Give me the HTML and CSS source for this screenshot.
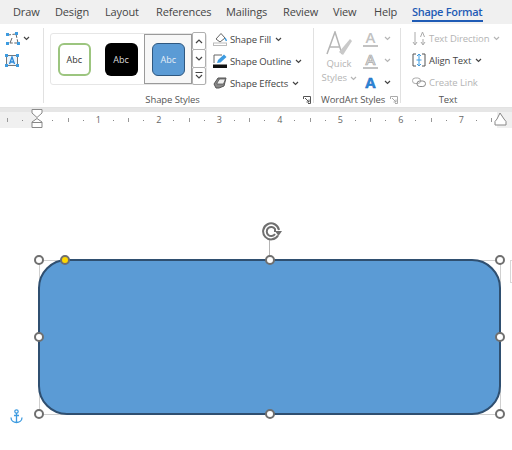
FILE: index.html
```html
<!DOCTYPE html>
<html lang="en">
<head>
    <meta charset="UTF-8">
    <title>Shape Format</title>
    <link rel="stylesheet" href="styles.css">
</head>
<body>
    <!-- Tabs -->
    <nav class="tabs">
        <span class="tab">Draw</span>
        <span class="tab">Design</span>
        <span class="tab">Layout</span>
        <span class="tab">References</span>
        <span class="tab">Mailings</span>
        <span class="tab">Review</span>
        <span class="tab">View</span>
        <span class="tab">Help</span>
        <span class="tab tab-active">Shape Format</span>
    </nav>

    <!-- Ribbon -->
    <section class="ribbon">
        <div class="group group-insert">
            <div class="insert-icon">
                <svg width="15" height="13" viewBox="0 0 15 13"><path d="M3 3 L11 2 L13 11 L3 11" fill="none" stroke="#666" stroke-dasharray="3 1.500"/><path d="M7 6 L5 11" stroke="#666"/><rect x="1" y="1" width="3" height="3" fill="#3d9be0"/><rect x="10" y="0" width="3" height="3" fill="#3d9be0"/><rect x="1" y="10" width="3" height="3" fill="#3d9be0"/><rect x="12" y="10" width="3" height="3" fill="#3d9be0"/></svg>
                <svg class="chev" width="7" height="5" viewBox="0 0 7 5"><path d="M1 1 L3.500 3.500 L6 1" fill="none" stroke="#444" stroke-width="1.200"/></svg>
            </div>
            <div class="insert-icon">
                <svg width="14" height="13" viewBox="0 0 14 13"><rect x="1.500" y="1.500" width="11" height="10" fill="#eaf4fc" stroke="#777"/><rect x="0" y="0" width="3" height="3" fill="#3d9be0"/><rect x="11" y="0" width="3" height="3" fill="#3d9be0"/><rect x="0" y="10" width="3" height="3" fill="#3d9be0"/><rect x="11" y="10" width="3" height="3" fill="#3d9be0"/><path d="M4.500 10 L7 3 L9.500 10 M5.500 8 H8.500" fill="none" stroke="#2b88d8" stroke-width="1.300"/></svg>
            </div>
        </div>

        <div class="group group-styles">
            <div class="styles-row">
                <div class="gallery">
                    <div class="swatch-cell"><div class="swatch swatch-green">Abc</div></div>
                    <div class="swatch-cell"><div class="swatch swatch-black">Abc</div></div>
                    <div class="swatch-cell swatch-selected"><div class="swatch swatch-blue">Abc</div></div>
                    <div class="spinner">
                        <span class="spin-btn"><svg width="8" height="5" viewBox="0 0 8 5"><path d="M1 4 L4 1 L7 4" fill="none" stroke="#444" stroke-width="1.200"/></svg></span>
                        <span class="spin-btn"><svg width="8" height="5" viewBox="0 0 8 5"><path d="M1 1 L4 4 L7 1" fill="none" stroke="#444" stroke-width="1.200"/></svg></span>
                        <span class="spin-btn"><svg width="8" height="7" viewBox="0 0 8 7"><path d="M0.500 0.500 H7.500 M1 3 L4 6 L7 3" fill="none" stroke="#444" stroke-width="1.100"/></svg></span>
                    </div>
                </div>
                <div class="shape-cmds">
                    <div class="cmd">
                        <svg width="14" height="14" viewBox="0 0 14 14"><path d="M3 7 L8 1.500 L12 6 L7 10 Z" fill="#fff" stroke="#666"/><path d="M12 6 L13.500 9" stroke="#3d9be0" stroke-width="1.500"/><rect x="0.500" y="11" width="13" height="2.500" fill="#fff" stroke="#bbb"/></svg>
                        <span>Shape Fill</span>
                        <svg class="chev" width="7" height="5" viewBox="0 0 7 5"><path d="M1 1 L3.500 3.500 L6 1" fill="none" stroke="#444" stroke-width="1.200"/></svg>
                    </div>
                    <div class="cmd">
                        <svg width="14" height="14" viewBox="0 0 14 14"><path d="M1 9 V1 H9" fill="none" stroke="#666"/><path d="M4 9 L5 6 L11 0.500 L13.500 3 L7.500 8.500 Z" fill="#3d9be0"/><rect x="0" y="10.500" width="14" height="3.500" fill="#111"/></svg>
                        <span>Shape Outline</span>
                        <svg class="chev" width="7" height="5" viewBox="0 0 7 5"><path d="M1 1 L3.500 3.500 L6 1" fill="none" stroke="#444" stroke-width="1.200"/></svg>
                    </div>
                    <div class="cmd">
                        <svg width="14" height="14" viewBox="0 0 14 14"><path d="M1 8 L5 2 H13 L11 10 L6 12 H3 Z" fill="#888" stroke="#555"/><path d="M4 7 L6.500 3 H12.500 L10.500 8 H4 Z" fill="#eee" stroke="#555" stroke-width="0.800"/></svg>
                        <span>Shape Effects</span>
                        <svg class="chev" width="7" height="5" viewBox="0 0 7 5"><path d="M1 1 L3.500 3.500 L6 1" fill="none" stroke="#444" stroke-width="1.200"/></svg>
                    </div>
                </div>
            </div>
            <div class="group-label">Shape Styles
                <svg class="launcher" width="8" height="8" viewBox="0 0 8 8"><path d="M0.500 3 V0.500 H7.500 V7.500 H5 M2 2 L6 6 M3.500 6 H6 V3.500" fill="none" stroke="#555"/></svg>
            </div>
        </div>

        <div class="group group-wordart">
            <div class="wordart-row">
                <div class="quick">
                    <svg width="28" height="26" viewBox="0 0 28 26"><path d="M2 23 L10 1 L17 23 M5 16 H15" fill="none" stroke="#b5b5b5" stroke-width="1.500"/><path d="M14 21 L25 8 L27 10 L18 24 Z" fill="#c9c9c9"/></svg>
                    <span>Quick</span>
                    <span>Styles <svg width="7" height="5" viewBox="0 0 7 5"><path d="M1 1 L3.500 3.500 L6 1" fill="none" stroke="#b5b5b5" stroke-width="1.200"/></svg></span>
                </div>
                <div class="wordart-abc">
                    <div class="abc-row">
                        <span class="abc abc-fill">A</span>
                        <svg width="7" height="5" viewBox="0 0 7 5"><path d="M1 1 L3.500 3.500 L6 1" fill="none" stroke="#b5b5b5" stroke-width="1.200"/></svg>
                    </div>
                    <div class="abc-row">
                        <span class="abc abc-line">A</span>
                        <svg width="7" height="5" viewBox="0 0 7 5"><path d="M1 1 L3.500 3.500 L6 1" fill="none" stroke="#b5b5b5" stroke-width="1.200"/></svg>
                    </div>
                    <div class="abc-row">
                        <span class="abc abc-blue">A</span>
                        <svg width="7" height="5" viewBox="0 0 7 5"><path d="M1 1 L3.500 3.500 L6 1" fill="none" stroke="#444" stroke-width="1.200"/></svg>
                    </div>
                </div>
            </div>
            <div class="group-label">WordArt Styles
                <svg class="launcher" width="8" height="8" viewBox="0 0 8 8"><path d="M0.500 3 V0.500 H7.500 V7.500 H5 M2 2 L6 6 M3.500 6 H6 V3.500" fill="none" stroke="#aaa"/></svg>
            </div>
        </div>

        <div class="group group-text">
            <div class="shape-cmds">
                <div class="cmd cmd-off">
                    <svg width="14" height="15" viewBox="0 0 14 15"><path d="M3 1 V13 M1 11 L3 14 L5 11 M11 8 V13 M9 11 L11 14 L13 11 M8.500 6 L10.500 1 L12.500 6" fill="none" stroke="#aaa"/></svg>
                    <span>Text Direction</span>
                    <svg class="chev" width="7" height="5" viewBox="0 0 7 5"><path d="M1 1 L3.500 3.500 L6 1" fill="none" stroke="#b5b5b5" stroke-width="1.200"/></svg>
                </div>
                <div class="cmd">
                    <svg width="14" height="14" viewBox="0 0 14 14"><path d="M4 1 H1 V13 H4 M10 1 H13 V13 H10" fill="none" stroke="#555"/><path d="M7 1 V13 M5 3 L7 1 L9 3 M5 11 L7 13 L9 11 M4.500 7 H9.500" fill="none" stroke="#3d9be0"/></svg>
                    <span>Align Text</span>
                    <svg class="chev" width="7" height="5" viewBox="0 0 7 5"><path d="M1 1 L3.500 3.500 L6 1" fill="none" stroke="#444" stroke-width="1.200"/></svg>
                </div>
                <div class="cmd cmd-off">
                    <svg width="14" height="14" viewBox="0 0 14 14"><rect x="0.500" y="3" width="8" height="5.500" rx="2.700" fill="none" stroke="#aaa"/><rect x="5" y="6" width="8.500" height="5.500" rx="2.700" fill="none" stroke="#888"/></svg>
                    <span>Create Link</span>
                </div>
            </div>
            <div class="group-label">Text</div>
        </div>
    </section>

    <!-- Ruler -->
    <div class="ruler">
        <span class="mark"><i class="line"></i></span>
        <span class="mark"><i class="dot"></i></span>
        <span class="mark"></span>
        <span class="mark"><i class="dot"></i></span>
        <span class="mark"><i class="line"></i></span>
        <span class="mark"><i class="dot"></i></span>
        <span class="mark">1</span>
        <span class="mark"><i class="dot"></i></span>
        <span class="mark"><i class="line"></i></span>
        <span class="mark"><i class="dot"></i></span>
        <span class="mark">2</span>
        <span class="mark"><i class="dot"></i></span>
        <span class="mark"><i class="line"></i></span>
        <span class="mark"><i class="dot"></i></span>
        <span class="mark">3</span>
        <span class="mark"><i class="dot"></i></span>
        <span class="mark"><i class="line"></i></span>
        <span class="mark"><i class="dot"></i></span>
        <span class="mark">4</span>
        <span class="mark"><i class="dot"></i></span>
        <span class="mark"><i class="line"></i></span>
        <span class="mark"><i class="dot"></i></span>
        <span class="mark">5</span>
        <span class="mark"><i class="dot"></i></span>
        <span class="mark"><i class="line"></i></span>
        <span class="mark"><i class="dot"></i></span>
        <span class="mark">6</span>
        <span class="mark"><i class="dot"></i></span>
        <span class="mark"><i class="line"></i></span>
        <span class="mark"><i class="dot"></i></span>
        <span class="mark">7</span>
        <span class="mark"><i class="dot"></i></span>
        <span class="mark"><i class="line"></i></span>
        <!-- Indent markers -->
        <svg class="indent indent-left" width="12" height="19" viewBox="0 0 12 19"><path d="M1 0.500 H11 V4 L6 8.500 L1 4 Z M6 9.500 L11 13 V18.500 H1 V13 Z M1 13.500 H11" fill="#fff" stroke="#888"/></svg>
        <svg class="indent indent-right" width="14" height="14" viewBox="0 0 14 14"><path d="M7 1 L11 7 L13 9.500 V13 H2 V9.500 L4 7 Z" fill="#fff" stroke="#888"/></svg>
    </div>

    <!-- Page with the selected shape -->
    <main class="page">
        <div class="frame"></div>
        <div class="shape"></div>
        <div class="rotate-line"></div>
        <svg class="rotate" width="22" height="20" viewBox="0 0 22 20"><path d="M17 13.500 A8 8 0 1 1 18 8" fill="none" stroke="#6f6f6f" stroke-width="2"/><path d="M14 12 A4.500 4.500 0 1 1 14 7 V10" fill="none" stroke="#6f6f6f" stroke-width="2"/><path d="M14 9 L21 9 L17.500 14 Z" fill="#6f6f6f"/></svg>
        <span class="handle handle-tl"></span>
        <span class="handle handle-tc"></span>
        <span class="handle handle-tr"></span>
        <span class="handle handle-ml"></span>
        <span class="handle handle-mr"></span>
        <span class="handle handle-bl"></span>
        <span class="handle handle-bc"></span>
        <span class="handle handle-br"></span>
        <span class="handle handle-adjust"></span>
        <svg class="anchor" width="13" height="15" viewBox="0 0 13 15"><circle cx="6.500" cy="2.500" r="1.700" fill="none" stroke="#3d9be0" stroke-width="1.200"/><path d="M6.500 4 V14 M1 8.500 C1 12 4 13.500 6.500 13.500 C9 13.500 12 12 12 8.500 M4 6.500 H9" fill="none" stroke="#3d9be0" stroke-width="1.300"/></svg>
        <div class="edge-box"></div>
    </main>
</body>
</html>
```

FILE: styles.css
```css
/* General */
* {
    box-sizing: border-box;
}

body {
    margin: 0;
    width: 512px;
    height: 450px;
    overflow: hidden;
    background-color: #fff;
    color: #444;
    font-family: "Open Sans", "Noto Sans", sans-serif;
    font-size: 10px;
}

svg {
    flex: none;
}

/* Tabs */
.tabs {
    display: flex;
    height: 24px;
    background-color: #f0f0f0;
    padding-left: 13px;
    font-size: 11px;
    letter-spacing: -0.150px;
    line-height: 23px;
}

.tab {
    color: #454545;
    margin-right: 16px;
    white-space: nowrap;
}

.tab:nth-child(1) { width: 26px; }
.tab:nth-child(2) { width: 34px; }
.tab:nth-child(3) { width: 35px; }
.tab:nth-child(4) { width: 54px; }
.tab:nth-child(5) { width: 41px; }
.tab:nth-child(6) { width: 34px; }
.tab:nth-child(7) { width: 25px; }
.tab:nth-child(8) { width: 22px; }

.tab-active {
    width: 71px;
    height: 22px;
    color: #1f5bb5;
    font-weight: 600;
    letter-spacing: -0.300px;
    border-bottom: 2px solid #1f5bb5;
}

/* Ribbon */
.ribbon {
    display: flex;
    height: 84px;
    background-color: #fff;
    border-bottom: 1px solid #e2e2e2;
}

.group {
    display: flex;
    flex-direction: column;
    justify-content: space-between;
    height: 75px;
    margin-top: 4px;
    border-right: 1px solid #e1e1e1;
}

.group-label {
    position: relative;
    margin-bottom: -3px;
    color: #555;
    font-size: 9.500px;
    letter-spacing: -0.100px;
    line-height: 13px;
    text-align: center;
    white-space: nowrap;
}

.launcher {
    position: absolute;
    right: 2px;
    top: 3px;
}

.group-insert {
    display: block;
    width: 44px;
    padding: 2px 0 0 5px;
}

.insert-icon {
    display: flex;
    align-items: center;
    gap: 3px;
    height: 16px;
    margin-bottom: 6px;
}

.group-styles {
    width: 270px;
    padding-left: 6px;
}

.group-styles .group-label {
    padding-right: 18px;
}

.styles-row {
    display: flex;
    gap: 6px;
    margin-top: 5px;
}

.styles-row .shape-cmds {
    margin-top: -2px;
}

.gallery {
    display: flex;
    align-items: stretch;
    height: 52px;
    width: 157px;
    border: 1px solid #e6e6e6;
    border-radius: 3px;
}

.swatch-cell {
    display: flex;
    align-items: center;
    justify-content: center;
    width: 47px;
}

.swatch-selected {
    width: 48px;
    border: 1px solid #9a9a9a;
    background-color: #f7f7f7;
}

.swatch {
    display: flex;
    align-items: center;
    justify-content: center;
    width: 33px;
    height: 33px;
    border-radius: 6px;
    font-size: 9px;
}

.swatch-green {
    background-color: #fff;
    border: 2px solid #9cc57f;
    color: #333;
}

.swatch-black {
    background-color: #000;
    color: #ddd;
}

.swatch-blue {
    background-color: #5b9bd5;
    border: 1px solid #2f5880;
    color: #e6eef7;
}

.spinner {
    display: flex;
    flex-direction: column;
    width: 14px;
    margin: -1px 0;
}

.spin-btn {
    display: flex;
    flex: 1;
    align-items: center;
    justify-content: center;
    background-color: #fff;
    border: 1px solid #b0b0b0;
    margin-top: -1px;
    border-radius: 2px;
}

.shape-cmds {
    display: flex;
    flex-direction: column;
    gap: 6px;
}

.cmd {
    display: flex;
    align-items: center;
    height: 16px;
    gap: 3px;
    color: #444;
    font-size: 9.500px;
    letter-spacing: -0.100px;
    white-space: nowrap;
}

.cmd .chev {
    margin-left: 1px;
}

.cmd-off {
    color: #b4b4b4;
}

/* WordArt */
.group-wordart {
    width: 87px;
    padding-left: 7px;
}

.group-wordart .group-label {
    padding-right: 20px;
}

.wordart-row {
    display: flex;
    gap: 6px;
    margin-top: 3px;
}

.quick {
    display: flex;
    flex-direction: column;
    align-items: center;
    width: 36px;
    color: #b4b4b4;
    font-size: 9.500px;
    line-height: 14px;
}

.quick span {
    white-space: nowrap;
}

.wordart-abc {
    display: flex;
    flex-direction: column;
    gap: 2px;
    margin-top: -3px;
}

.abc-row {
    display: flex;
    align-items: center;
    gap: 6px;
    height: 20px;
}

.abc {
    width: 15px;
    color: #c2c2c2;
    font-size: 15px;
    font-weight: 600;
    line-height: 16px;
    text-align: center;
}

.abc-fill {
    border-bottom: 2px solid #c2c2c2;
}

.abc-line {
    color: #dedede;
    -webkit-text-stroke: 0.700px #aaa;
    border-bottom: 2px solid #c2c2c2;
}

.abc-blue {
    color: #2b88d8;
    font-weight: 700;
    -webkit-text-stroke: 0.400px #1f5bb5;
}

/* Text */
.group-text {
    width: 96px;
    padding-left: 11px;
    border-right: none;
}

.group-text .shape-cmds {
    margin-top: 2px;
}

.group-text .group-label {
    margin-left: -11px;
    padding-right: 2px;
}

/* Ruler */
.ruler {
    position: relative;
    display: flex;
    height: 20px;
    border-top: 4px solid #e6e6e6;
    background: linear-gradient(to right, #f0f0f0 37px, #fff 37px, #fff 497px, #f0f0f0 497px);
    color: #666;
    font-size: 9px;
    line-height: 16px;
}

.mark {
    display: flex;
    align-items: center;
    justify-content: center;
    flex: none;
    width: 15.125px;
    height: 16px;
}

.dot {
    width: 1px;
    height: 1px;
    background-color: #888;
}

.line {
    width: 1px;
    height: 4px;
    background-color: #999;
}

.indent {
    position: absolute;
}

.indent-left {
    left: 31px;
    top: -3px;
}

.indent-right {
    left: 493px;
    top: 0;
}

/* Page */
.page {
    position: relative;
    height: 322px;
}

.frame {
    position: absolute;
    left: 39px;
    top: 132px;
    width: 462px;
    height: 155px;
    border: 1px solid #cfcfcf;
}

.shape {
    position: absolute;
    left: 38px;
    top: 131px;
    width: 463px;
    height: 156px;
    background-color: #5b9bd5;
    border: 2.500px solid #2f4f70;
    border-radius: 29px;
}

.rotate-line {
    position: absolute;
    left: 269px;
    top: 112px;
    width: 1px;
    height: 20px;
    background-color: #b5b5b5;
}

.rotate {
    position: absolute;
    left: 261px;
    top: 94px;
}

.handle {
    position: absolute;
    width: 10px;
    height: 10px;
    margin: -5px 0 0 -5px;
    background-color: #fff;
    border: 2px solid #6f6f6f;
    border-radius: 50%;
}

.handle-tl { left: 39px; top: 132px; }
.handle-tc { left: 269.500px; top: 132px; }
.handle-tr { left: 500px; top: 132px; }
.handle-ml { left: 39px; top: 209px; }
.handle-mr { left: 500px; top: 209px; }
.handle-bl { left: 39px; top: 286px; }
.handle-bc { left: 269.500px; top: 286px; }
.handle-br { left: 500px; top: 286px; }

.handle-adjust {
    left: 65px;
    top: 132px;
    background-color: #ffd800;
}

.anchor {
    position: absolute;
    left: 10px;
    top: 281px;
}

.edge-box {
    position: absolute;
    left: 510px;
    top: 132px;
    width: 2px;
    height: 23px;
    border: 1px solid #d8d8d8;
    border-right: none;
}
```
